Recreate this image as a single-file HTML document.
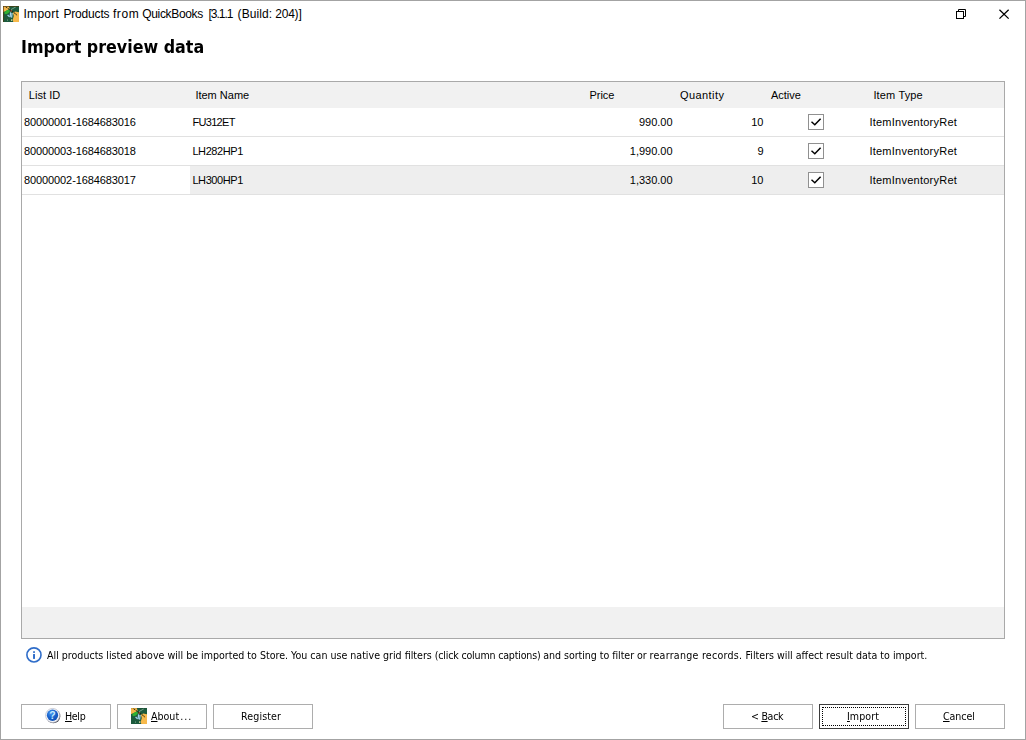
<!DOCTYPE html>
<html lang="en">
<head>
<meta charset="utf-8">
<title>Import Products from QuickBooks</title>
<style>
html,body{margin:0;padding:0;}
body{width:1026px;height:740px;overflow:hidden;background:#fff;font-family:"Liberation Sans",sans-serif;color:#000;}
#win{position:absolute;left:0;top:0;width:1024px;height:738px;border:1px solid #a3a3a3;background:#fff;}
.abs{position:absolute;white-space:nowrap;}
.t12{font-size:12px;line-height:16px;}
.t11{font-size:11px;line-height:14px;font-family:"DejaVu Sans Condensed","DejaVu Sans","Liberation Sans",sans-serif;transform:scaleX(0.961);transform-origin:0 0;}
.g{font-size:11px;line-height:14px;}
#title{left:23.5px;top:6px;width:290px;height:16px;font-size:12px;line-height:16px;color:#000;}
.tw{position:absolute;top:0;}
#heading{left:20.8px;top:36.4px;font-family:"DejaVu Sans","Liberation Sans",sans-serif;font-weight:bold;font-size:17px;line-height:22px;transform:scaleX(0.936);transform-origin:0 0;}
#grid{position:absolute;left:21px;top:81px;width:982px;height:556px;border:1px solid #a9a9a9;background:#fff;}
#ghead{position:absolute;left:0;top:0;width:982px;height:26px;background:#f1f1f1;}
#gfoot{position:absolute;left:0;top:525px;width:982px;height:31px;background:#f1f1f1;}
.row{position:absolute;left:0;width:982px;height:28px;border-bottom:1px solid #e1e1e1;}
.sel{position:absolute;left:168px;top:0;width:814px;height:28px;background:#eeeeee;}
.cb{position:absolute;width:14px;height:14px;border:1px solid #909090;background:#fff;}
.cb svg{position:absolute;left:0;top:0;}
.btn{position:absolute;top:704px;height:23px;border:1px solid #adadad;background:#fff;}
.btn.def{border-color:#3c3c3c;}
.btn .focus{position:absolute;left:2px;top:2px;right:2px;bottom:2px;border:1px dotted #000;}
u{text-decoration:underline;text-underline-offset:1px;}
</style>
</head>
<body>
<div id="win"></div>

<!-- title bar -->
<svg class="abs" style="left:3px;top:6px" width="16" height="16" viewBox="0 0 16 16">
  <defs><clipPath id="c1"><rect width="16" height="16"/></clipPath><filter id="b1" x="-10%" y="-10%" width="120%" height="120%"><feGaussianBlur stdDeviation="0.45"/></filter></defs>
  <rect width="16" height="16" fill="#1d5a3e"/>
  <g clip-path="url(#c1)"><g filter="url(#b1)">
  <rect x="-1" y="-1" width="18" height="18" fill="#1d5a3e"/>
  <polygon points="-1,-1 5.6,-1 6.6,2.8 3.6,4.8 -1,6.4" fill="#f4b548"/>
  <polygon points="9.9,6.8 12.2,5.6 17,6.6 17,17 10.4,17 9.8,13.4 10.8,10" fill="#f7b94b"/>
  <ellipse cx="4.1" cy="6" rx="3" ry="1.7" transform="rotate(-28 4.1 6)" fill="#2db232"/>
  <path d="M7.6 6.4L7.1 11.2M9.1 7L8.6 11.6M4.6 9L6.3 10.6" stroke="#a6d6f4" stroke-width="1.2" fill="none"/>
  <circle cx="8" cy="4.7" r="1" fill="#a85a3e"/>
  <path d="M2.6 0.8L13.4 8.4" stroke="#23240e" stroke-width="1" stroke-dasharray="1.6 0.9" fill="none"/>
  <path d="M8 3.6L12.8 0.9" stroke="#9dc0a6" stroke-width="0.7" fill="none"/>
  <path d="M12.6 7.4L13.6 9.4" stroke="#5a4a14" stroke-width="0.9" fill="none"/>
  <path d="M0 0.4H16M0.4 0V16" stroke="#4e3a10" stroke-width="0.9" opacity="0.85" fill="none"/>
  <rect x="8" y="13.4" width="1.4" height="1.4" fill="#e9e2a4"/>
  <rect x="4" y="13.6" width="1" height="1" fill="#7fb08c"/>
  </g></g>
</svg>
<div id="title" class="abs"><span class="tw" style="left:0.0px;letter-spacing:0.28px">Import</span> <span class="tw" style="left:39.9px;letter-spacing:-0.17px">Products</span> <span class="tw" style="left:89.4px;letter-spacing:0.6px">from</span> <span class="tw" style="left:118.8px;letter-spacing:-0.34px">QuickBooks</span> <span class="tw" style="left:185.0px;letter-spacing:-1.02px">[3.1.1</span> <span class="tw" style="left:214.1px;letter-spacing:0.1px">(Build:</span> <span class="tw" style="left:251.7px;letter-spacing:-0.2px">204)]</span></div>
<svg class="abs" style="left:955px;top:8px" width="12" height="12" viewBox="0 0 12 12" fill="none" stroke="#000" stroke-width="1">
  <path d="M3.5 3.5V1.5H10.5V8.5H8.5"/>
  <rect x="1.5" y="3.5" width="7" height="7"/>
</svg>
<svg class="abs" style="left:998px;top:8px" width="12" height="12" viewBox="0 0 12 12" fill="none" stroke="#000" stroke-width="1.3">
  <path d="M1.45 1.8L10.65 10.6M10.65 1.8L1.45 10.6"/>
</svg>

<div id="heading" class="abs">Import preview data</div>

<!-- grid -->
<div id="grid">
  <div id="ghead"></div>
  <div class="row" style="top:26px"></div>
  <div class="row" style="top:55px"></div>
  <div class="row" style="top:84px"><div class="sel"></div></div>
  <div id="gfoot"></div>
</div>

<!-- header captions -->
<div class="abs g" style="left:28.8px;top:88px;letter-spacing:0.05px">List ID</div>
<div class="abs g" style="left:195.4px;top:88px">Item Name</div>
<div class="abs g" style="left:589.4px;top:88px">Price</div>
<div class="abs g" style="left:679.9px;top:88px;letter-spacing:0.45px">Quantity</div>
<div class="abs g" style="left:770.9px;top:88px">Active</div>
<div class="abs g" style="left:873.4px;top:88px;letter-spacing:0.15px">Item Type</div>

<!-- row 1 -->
<div class="abs g" style="left:24px;top:115px;letter-spacing:-0.1px">80000001-1684683016</div>
<div class="abs g" style="left:192.4px;top:115px;letter-spacing:-0.68px">FU312ET</div>
<div class="abs g" style="right:353.4px;top:115px">990.00</div>
<div class="abs g" style="right:262.5px;top:115px">10</div>
<div class="cb" style="left:808px;top:114px"><svg width="14" height="14" viewBox="0 0 14 14"><path d="M2.5 6.8L5.8 9.7L11.6 3.8" fill="none" stroke="#000" stroke-width="1.5"/></svg></div>
<div class="abs g" style="left:869.4px;top:115px;letter-spacing:0.25px">ItemInventoryRet</div>

<!-- row 2 -->
<div class="abs g" style="left:24px;top:144px;letter-spacing:-0.1px">80000003-1684683018</div>
<div class="abs g" style="left:192.4px;top:144px;letter-spacing:-0.4px">LH282HP1</div>
<div class="abs g" style="right:353.4px;top:144px">1,990.00</div>
<div class="abs g" style="right:262.5px;top:144px">9</div>
<div class="cb" style="left:808px;top:143px"><svg width="14" height="14" viewBox="0 0 14 14"><path d="M2.5 6.8L5.8 9.7L11.6 3.8" fill="none" stroke="#000" stroke-width="1.5"/></svg></div>
<div class="abs g" style="left:869.4px;top:144px;letter-spacing:0.25px">ItemInventoryRet</div>

<!-- row 3 -->
<div class="abs g" style="left:24px;top:173px;letter-spacing:-0.1px">80000002-1684683017</div>
<div class="abs g" style="left:192.4px;top:173px;letter-spacing:-0.4px">LH300HP1</div>
<div class="abs g" style="right:353.4px;top:173px">1,330.00</div>
<div class="abs g" style="right:262.5px;top:173px">10</div>
<div class="cb" style="left:808px;top:172px"><svg width="14" height="14" viewBox="0 0 14 14"><path d="M2.5 6.8L5.8 9.7L11.6 3.8" fill="none" stroke="#000" stroke-width="1.5"/></svg></div>
<div class="abs g" style="left:869.4px;top:173px;letter-spacing:0.25px">ItemInventoryRet</div>

<!-- info line -->
<svg class="abs" style="left:25px;top:646px" width="18" height="18" viewBox="0 0 18 18">
  <circle cx="8.95" cy="8.9" r="7.05" fill="#fff" stroke="#2f6dc9" stroke-width="1.6"/>
  <rect x="8.05" y="8.05" width="1.95" height="4.85" fill="#2f6dc9"/>
  <rect x="8.05" y="5.3" width="1.95" height="1.55" fill="#2f6dc9"/>
</svg>
<div id="info" class="abs t11" style="left:47px;top:649px">All products listed above will be imported to Store. You can use native grid filters <span style="letter-spacing:-0.195px">(click column captions) </span><span style="letter-spacing:-0.05px">and sorting to filter or </span><span style="letter-spacing:0.27px">rearrange records. </span>Filters will affect result data to import.</div>

<!-- buttons -->
<div class="btn" style="left:21px;width:88px"></div>
<div class="btn" style="left:117px;width:88px"></div>
<div class="btn" style="left:213px;width:98px"></div>
<div class="btn" style="left:723px;width:88px"></div>
<div class="btn def" style="left:819px;width:88px"><div class="focus"></div></div>
<div class="btn" style="left:915px;width:88px"></div>

<svg class="abs" style="left:44px;top:707px" width="18" height="18" viewBox="0 0 18 18">
  <defs>
    <radialGradient id="hg" cx="0.38" cy="0.3" r="0.75"><stop offset="0" stop-color="#4a97ee"/><stop offset="0.55" stop-color="#1a63cc"/><stop offset="1" stop-color="#0f4fb4"/></radialGradient>
    <filter id="hs" x="-20%" y="-20%" width="140%" height="140%"><feGaussianBlur stdDeviation="0.6"/></filter>
  </defs>
  <circle cx="9.35" cy="9.3" r="7.0" fill="#3c3c46" opacity="0.85" filter="url(#hs)"/>
  <circle cx="8.6" cy="8.45" r="7.0" fill="#f6f8fc" stroke="#b4b8c4" stroke-width="0.7"/>
  <circle cx="8.5" cy="8.25" r="5.65" fill="url(#hg)"/>
  <text x="8.5" y="12" text-anchor="middle" font-family="Liberation Sans, sans-serif" font-weight="bold" font-size="10.5" fill="#c4eaff">?</text>
</svg>
<div class="abs t11" style="left:64.7px;top:710px;letter-spacing:-0.35px"><u>H</u>elp</div>

<svg class="abs" style="left:131px;top:708px" width="16" height="16" viewBox="0 0 16 16">
  <defs><clipPath id="c2"><rect width="16" height="16"/></clipPath><filter id="b2" x="-10%" y="-10%" width="120%" height="120%"><feGaussianBlur stdDeviation="0.45"/></filter></defs>
  <rect width="16" height="16" fill="#1d5a3e"/>
  <g clip-path="url(#c2)"><g filter="url(#b2)">
  <rect x="-1" y="-1" width="18" height="18" fill="#1d5a3e"/>
  <polygon points="-1,-1 5.6,-1 6.6,2.8 3.6,4.8 -1,6.4" fill="#f4b548"/>
  <polygon points="9.9,6.8 12.2,5.6 17,6.6 17,17 10.4,17 9.8,13.4 10.8,10" fill="#f7b94b"/>
  <ellipse cx="4.1" cy="6" rx="3" ry="1.7" transform="rotate(-28 4.1 6)" fill="#2db232"/>
  <path d="M7.6 6.4L7.1 11.2M9.1 7L8.6 11.6M4.6 9L6.3 10.6" stroke="#a6d6f4" stroke-width="1.2" fill="none"/>
  <circle cx="8" cy="4.7" r="1" fill="#a85a3e"/>
  <path d="M2.6 0.8L13.4 8.4" stroke="#23240e" stroke-width="1" stroke-dasharray="1.6 0.9" fill="none"/>
  <path d="M8 3.6L12.8 0.9" stroke="#9dc0a6" stroke-width="0.7" fill="none"/>
  <path d="M12.6 7.4L13.6 9.4" stroke="#5a4a14" stroke-width="0.9" fill="none"/>
  <path d="M0 0.3H16" stroke="#2c2a10" stroke-width="0.6" opacity="0.3" fill="none"/>
  <rect x="8" y="13.4" width="1.4" height="1.4" fill="#e9e2a4"/>
  <rect x="4" y="13.6" width="1" height="1" fill="#7fb08c"/>
  </g></g>
</svg>
<div class="abs t11" style="left:151px;top:710px"><u>A</u>bout<span style="letter-spacing:0.95px;margin-left:1.2px">...</span></div>
<div class="abs t11" style="left:241.2px;top:710px;letter-spacing:0.13px">Register</div>
<div class="abs t11" style="left:751.4px;top:710px;letter-spacing:-0.32px">&lt; <u>B</u>ack</div>
<div class="abs t11" style="left:846.5px;top:710px;letter-spacing:0.06px"><u>I</u>mport</div>
<div class="abs t11" style="left:943px;top:710px;letter-spacing:-0.06px"><u>C</u>ancel</div>
</body>
</html>
